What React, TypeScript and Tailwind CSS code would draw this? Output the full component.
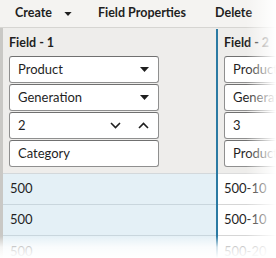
import React from 'react';

const Caret = ({ w = 9 }: { w?: number }) => (
  <svg width={w} height={Math.round(w * 0.55)} viewBox="0 0 9 5" className="shrink-0">
    <path d="M0 0h9L4.5 5z" fill="#1f1f1f" />
  </svg>
);

const Chevron = ({ up }: { up?: boolean }) => (
  <svg width="11" height="7" viewBox="0 0 11 7" className="shrink-0">
    <path
      d={up ? 'M1 6l4.5-4.5L10 6' : 'M1 1l4.5 4.5L10 1'}
      fill="none"
      stroke="#1f1f1f"
      strokeWidth="1.6"
    />
  </svg>
);

function Box({ children, right }: { children: React.ReactNode; right?: React.ReactNode }) {
  return (
    <div className="flex h-[27px] items-center justify-between rounded-[3px] border border-[#8f8f8f] border-t-[#707070] bg-white pl-[8px] pr-[9px] text-[13px] text-[#1f1f1f]">
      <span className="whitespace-nowrap">{children}</span>
      {right}
    </div>
  );
}

export default function App() {
  return (
    <div
      className="relative h-[258px] w-[276px] overflow-hidden bg-[#eeedeb]"
      style={{ fontFamily: 'Lato, "Open Sans", sans-serif' }}
    >
      {/* Toolbar */}
      <div className="flex h-[28px] items-center border-b border-[#d6d5d2] bg-[#f4f3f1] text-[12.5px] font-bold text-[#1f1f1f]">
        <span className="ml-[15px]">Create</span>
        <span className="ml-[12px]"><Caret w={8} /></span>
        <span className="ml-[26px]">Field Properties</span>
        <span className="ml-[29px]">Delete</span>
      </div>

      <div className="flex h-[230px] border-l-[3px] border-[#c9c8c5]">
        {/* Column 1 */}
        <div className="flex w-[213px] shrink-0 flex-col">
          <div className="px-[6px] pt-[7px]">
            <div className="mb-[5px] text-[12.5px] font-bold leading-[16px] text-[#1f1f1f]">Field - 1</div>
            <div className="flex w-[150px] flex-col gap-[1px]">
              <Box right={<Caret />}>Product</Box>
              <Box right={<Caret />}>Generation</Box>
              <Box
                right={
                  <span className="flex items-center gap-[17px]">
                    <Chevron />
                    <Chevron up />
                  </span>
                }
              >
                2
              </Box>
              <Box>Category</Box>
            </div>
          </div>
          <div className="mt-[6px] flex flex-col border-t border-[#d3d8db] bg-[#e4f0f6] text-[13px] text-[#1f1f1f]">
            <div className="flex h-[31px] items-center border-b border-[#c9d6dd] pl-[7px]">500</div>
            <div className="flex h-[31px] items-center border-b border-[#c9d6dd] pl-[7px]">500</div>
            <div className="flex h-[31px] items-center pl-[7px]">500</div>
          </div>
        </div>

        {/* Column 2 */}
        <div className="mt-[1px] flex min-w-0 flex-1 flex-col overflow-hidden border-l-2 border-[#2b7aa3]">
          <div className="pl-[6px] pt-[6px]">
            <div className="mb-[5px] whitespace-nowrap text-[12.5px] font-bold leading-[16px] text-[#1f1f1f]">
              Field - <span className="text-[#777]">2</span>
            </div>
            <div className="flex w-[150px] flex-col gap-[1px]">
              <Box>Product</Box>
              <Box>Generation</Box>
              <Box>3</Box>
              <Box>Product</Box>
            </div>
          </div>
          <div className="mt-[6px] flex flex-col border-t border-[#dcdcdc] bg-white text-[13px] text-[#1f1f1f]">
            <div className="flex h-[31px] items-center border-b border-[#d6d6d6] pl-[6px]">500-10</div>
            <div className="flex h-[31px] items-center border-b border-[#d6d6d6] pl-[6px]">500-10</div>
            <div className="flex h-[31px] items-center pl-[6px]">500-20</div>
          </div>
        </div>
      </div>

      {/* right fade */}
      <div className="pointer-events-none absolute right-0 top-0 h-full w-[30px] bg-gradient-to-r from-transparent to-white" />
      {/* bottom fade */}
      <div className="pointer-events-none absolute bottom-0 left-0 h-[22px] w-full bg-gradient-to-b from-transparent via-white/80 to-white" />
    </div>
  );
}
